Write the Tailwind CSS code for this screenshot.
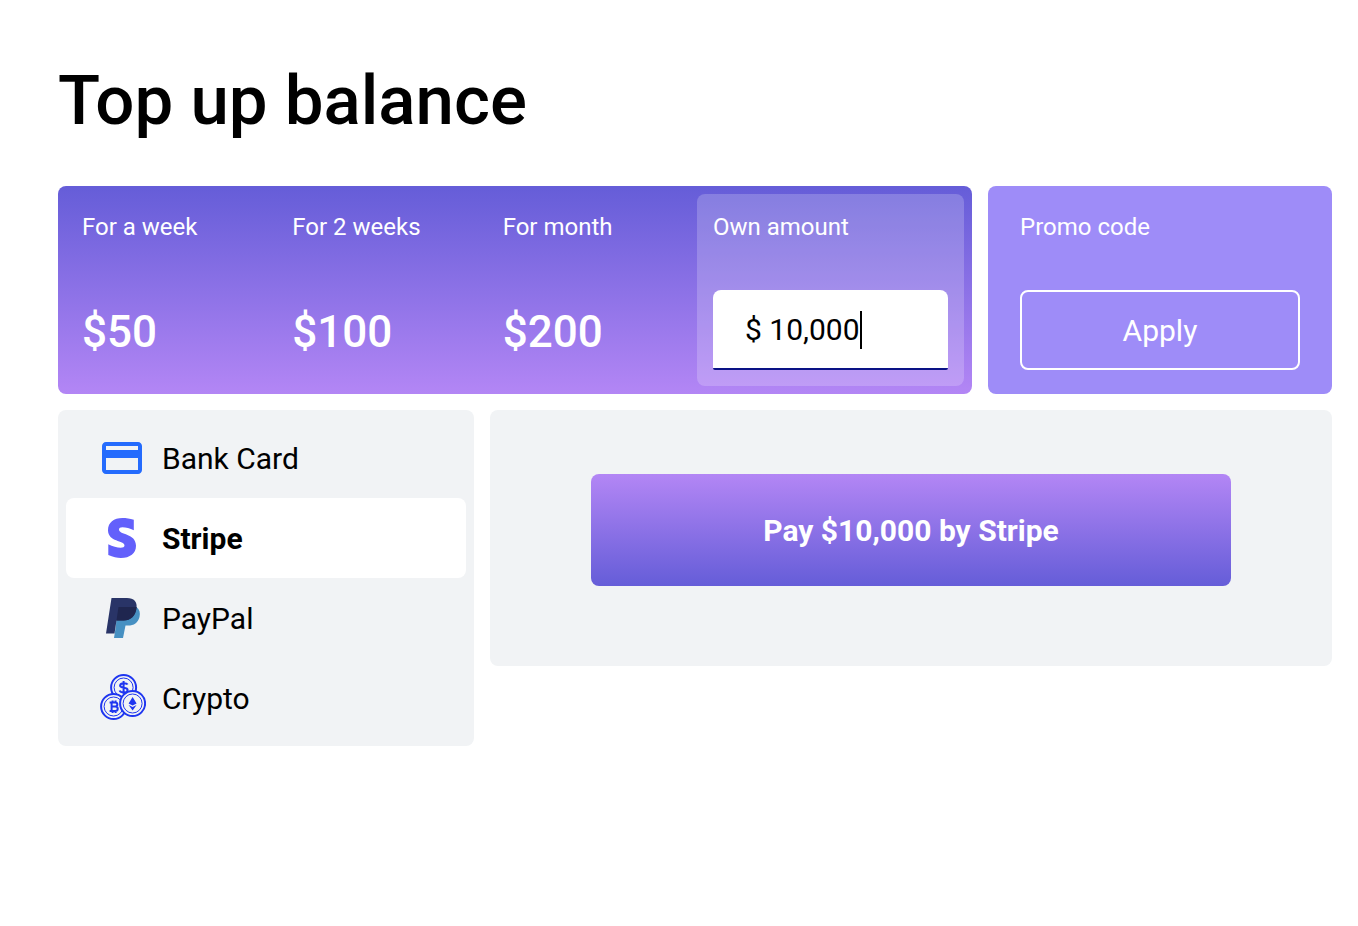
<!DOCTYPE html>
<html lang="en">
<head>
    <meta charset="UTF-8">
    <meta name="viewport" content="width=device-width, initial-scale=1.0">
    <title>Top up balance</title>
    <script src="https://cdn.jsdelivr.net/npm/@tailwindcss/browser@4"></script>
</head>
<body class="bg-white text-black font-['Roboto',sans-serif]">

    <main class="pt-14 pb-16 pl-[58px] pr-[26px]">
        <h1 class="text-[69px] leading-[90px] font-medium mb-10">Top up balance</h1>

        <!-- Amounts and promo code -->
        <div class="flex gap-4 mb-4">
            <section class="flex-1 flex h-52 p-2 rounded-lg text-white bg-linear-to-b/srgb from-[#655dd8] to-[#b386f5]">
                <button type="button" class="flex-1 flex flex-col justify-between items-start p-4 rounded-lg cursor-pointer">
                    <span class="text-2xl leading-[34px]">For a week</span>
                    <span class="text-[44px] leading-[76px] font-medium">$50</span>
                </button>
                <button type="button" class="flex-1 flex flex-col justify-between items-start p-4 rounded-lg cursor-pointer">
                    <span class="text-2xl leading-[34px]">For 2 weeks</span>
                    <span class="text-[44px] leading-[76px] font-medium">$100</span>
                </button>
                <button type="button" class="flex-1 flex flex-col justify-between items-start p-4 rounded-lg cursor-pointer">
                    <span class="text-2xl leading-[34px]">For month</span>
                    <span class="text-[44px] leading-[76px] font-medium">$200</span>
                </button>
                <div class="w-[267px] flex flex-col justify-between p-4 rounded-lg bg-white/20">
                    <label for="ownAmount" class="text-2xl leading-[34px]">Own amount</label>
                    <div class="flex items-center h-20 px-8 pt-0.5 rounded-t-lg rounded-b-xs border-b-2 border-[#0a1285] bg-white text-black">
                        <input id="ownAmount" type="text" value="$ 10,000" class="field-sizing-content text-[30px] leading-10 outline-none caret-transparent">
                        <span class="w-[2px] h-[38px] bg-black"></span>
                    </div>
                </div>
            </section>

            <section class="w-[344px] flex flex-col justify-between px-8 py-6 rounded-lg bg-[#9e8cf8] text-white">
                <h2 class="text-2xl leading-[34px]">Promo code</h2>
                <button type="button" class="h-20 rounded-lg border-2 border-white text-[30px] cursor-pointer">Apply</button>
            </section>
        </div>

        <!-- Payment method and pay button -->
        <div class="flex items-start gap-4">
            <fieldset class="w-[416px] p-2 rounded-lg bg-[#f1f3f5] text-[30px]">
                <label class="relative flex items-center gap-4 h-20 px-8 rounded-lg cursor-pointer has-checked:bg-white has-checked:font-bold">
                    <input type="radio" name="method" value="card" class="sr-only">
                    <svg class="size-12" viewBox="0 0 24 24" fill="#246bfd"><path d="M20 4H4c-1.110 0-1.990.89-1.990 2L2 18c0 1.110.89 2 2 2h16c1.110 0 2-.89 2-2V6c0-1.110-.89-2-2-2zm0 14H4v-6h16v6zm0-10H4V6h16v2z"/></svg>
                    Bank Card
                </label>
                <label class="relative flex items-center gap-4 h-20 px-8 rounded-lg cursor-pointer has-checked:bg-white has-checked:font-bold">
                    <input type="radio" name="method" value="stripe" class="sr-only" checked>
                    <svg class="size-12" viewBox="0 0 48 48" fill="#6360fb"><path d="M21 15.500C21 14 22.300 13.300 24.400 13.300C27.700 13.300 32.200 14.400 35.800 16.200V5.800C31.800 4.500 28.200 4 24.500 4C15.800 4 10 8.600 10 16.200C10 28.100 26.500 26.200 26.500 31.300C26.500 33.100 24.900 33.700 22.700 33.700C19.300 33.700 14.500 32.200 10.300 30.200V41C14.900 42.900 19.200 44 22.900 44C32 44 38 39.500 38 31.800C38 18.900 21 21.200 21 15.500Z"/></svg>
                    Stripe
                </label>
                <label class="relative flex items-center gap-4 h-20 px-8 rounded-lg cursor-pointer has-checked:bg-white has-checked:font-bold">
                    <input type="radio" name="method" value="paypal" class="sr-only">
                    <svg class="size-12" viewBox="0 0 48 48">
                        <path fill="#4790c2" d="M19 13H38.500C41.500 15.500 42.500 18.500 41.500 23C40 29 36 31.500 30 31.500H27.500L25 44H16L18 31Z"/>
                        <path fill="#293467" d="M13.500 4H29C36 4 39.500 8 38.500 14C37.500 22 32.500 26.500 25.500 26.500H18.500L16.500 39.500H8Z"/>
                        <path fill="#1f264f" d="M20.500 13H38.600C38 22 32.500 26.500 25.500 26.500H18.500Z"/>
                    </svg>
                    PayPal
                </label>
                <label class="relative flex items-center gap-4 h-20 px-8 rounded-lg cursor-pointer has-checked:bg-white has-checked:font-bold">
                    <input type="radio" name="method" value="crypto" class="sr-only">
                    <svg class="size-12" viewBox="-0.6 -0.5 48 48" fill="none" stroke="#1f36f0">
                        <circle cx="25" cy="13" r="12.500" stroke-width="2"/>
                        <circle cx="25" cy="13" r="9.500"/>
                        <path stroke-width="2" d="M29 10C28 8.500 22 8 21.500 11C21.500 14.500 29 12 29 15.500C29 19 22 18.500 21 16M25 6.500V19.500"/>
                        <circle cx="15" cy="32" r="12.500" stroke-width="2" fill="#f1f3f5"/>
                        <circle cx="15" cy="32" r="9.500"/>
                        <path stroke-width="2" d="M11 28H16.500C19.500 28 19.500 32 16.500 32H13M16.500 32C20 32 20 36.500 16.500 36.500H11M13 28V36.500M14 26V28M17 26V28M14 36.500V38.500M17 36.500V38.500"/>
                        <circle cx="34" cy="29" r="12.500" stroke-width="2" fill="#f1f3f5"/>
                        <circle cx="34" cy="29" r="9.500"/>
                        <path stroke="none" fill="#1f36f0" d="M34 22.500L38 29L34 31L30 29ZM30 30.500L34 32.500L38 30.500L34 36Z"/>
                    </svg>
                    Crypto
                </label>
            </fieldset>

            <section class="flex-1 flex justify-center px-8 pt-16 pb-20 rounded-lg bg-[#f1f3f5]">
                <button type="button" class="w-[640px] h-28 rounded-lg text-white text-[30px] font-bold cursor-pointer bg-linear-to-b/srgb from-[#b386f5] to-[#655dd8]">Pay $10,000 by Stripe</button>
            </section>
        </div>
    </main>

</body>
</html>
